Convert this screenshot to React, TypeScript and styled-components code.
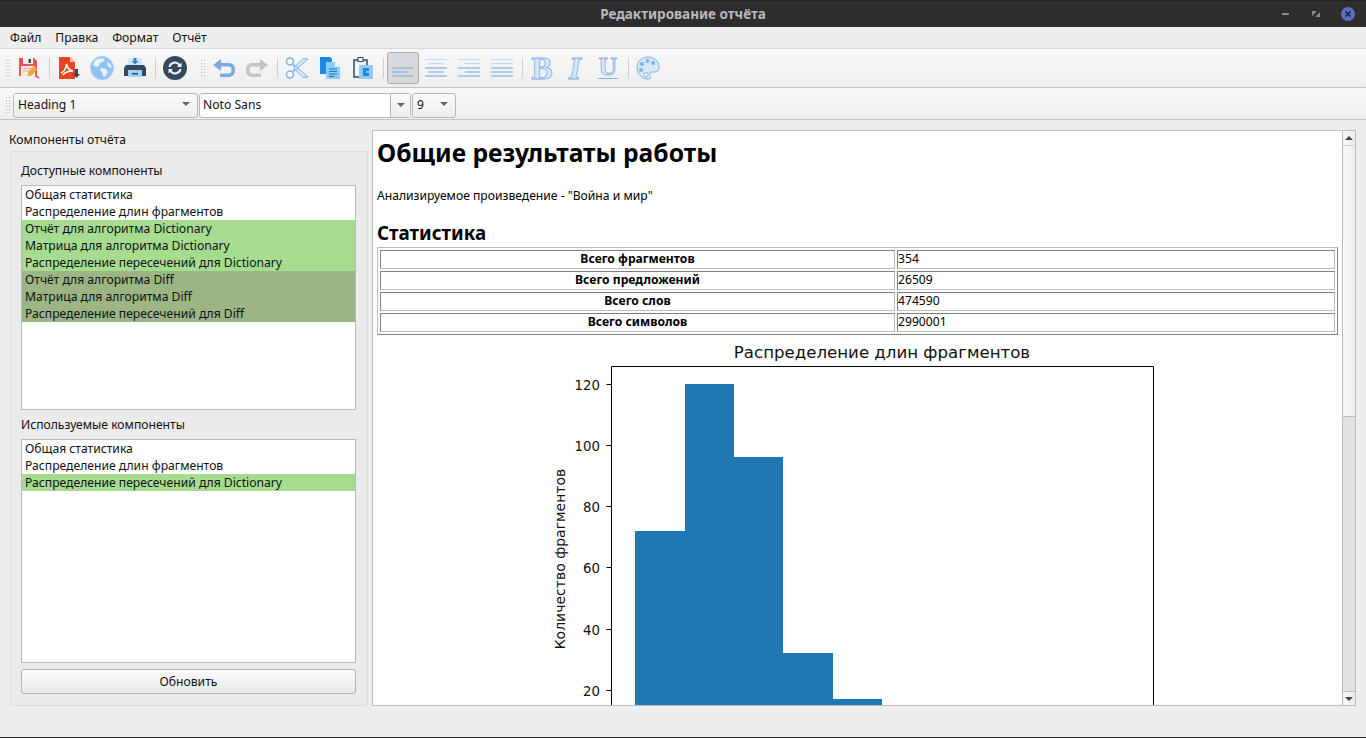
import React from 'react';
import styled, { createGlobalStyle } from 'styled-components';

const GlobalStyle = createGlobalStyle`
  html, body {
    margin: 0;
    padding: 0;
    background: #eeeeee;
  }
  * {
    box-sizing: border-box;
  }
  body {
    font-family: 'Noto Sans', sans-serif;
    font-size: 12.15px;
    color: #111;
  }
`;

const Window = styled.div`
  width: 1366px;
  height: 738px;
  display: flex;
  flex-direction: column;
  overflow: hidden;
  background: #eeeeee;
  border-bottom: 1px solid #2b2b2b;
`;

const TitleBar = styled.div`
  height: 27px;
  flex: none;
  display: flex;
  align-items: center;
  justify-content: center;
  position: relative;
  background: #2d2d2d;
  border-top: 1px solid #222;
  color: #b9b9b9;
  font-size: 13.5px;
  font-weight: 700;
`;

const WindowButtons = styled.div`
  position: absolute;
  right: 10px;
  top: 5px;
  display: flex;
  align-items: center;
  gap: 19px;
`;

const MenuBar = styled.div`
  height: 22px;
  flex: none;
  display: flex;
  align-items: center;
  padding-left: 10px;
  gap: 14px;
  background: #eeeeee;
  border-bottom: 1px solid #d8d8d8;
`;

const MenuItem = styled.span`
  font-size: 12.15px;
`;

const Toolbar = styled.div`
  height: 39px;
  flex: none;
  display: flex;
  align-items: center;
  padding-left: 5px;
  background: linear-gradient(#f8f8f8, #eeeeee);
  border-bottom: 1px solid #c4c4c4;
`;

const Grip = styled.div<{ $offset?: number }>`
  width: 6px;
  height: 18px;
  margin: 0 2px 0 ${({ $offset }) => $offset ?? 0}px;
  flex: none;
  background-image: radial-gradient(#b4b4b4 0.7px, transparent 0.8px);
  background-size: 3px 3px;
`;

const Separator = styled.div`
  width: 1px;
  height: 20px;
  margin: 0 3px;
  flex: none;
  background: #cfcfcf;
`;

const ToolButton = styled.div<{ $active?: boolean }>`
  width: 32px;
  height: 32px;
  margin-right: 1px;
  flex: none;
  display: flex;
  align-items: center;
  justify-content: center;
  border-radius: 3px;
  ${({ $active }) =>
    $active ? 'background: #d9d9d9; border: 1px solid #a9a9a9;' : ''}
`;

const FormatBar = styled.div`
  height: 32px;
  flex: none;
  display: flex;
  align-items: center;
  padding: 3px 0 0 5px;
  background: linear-gradient(#f8f8f8, #eeeeee);
  border-bottom: 1px solid #c4c4c4;
`;

const Combo = styled.div<{ $w: number }>`
  width: ${({ $w }) => $w}px;
  height: 25px;
  margin-right: 1px;
  flex: none;
  display: flex;
  align-items: center;
  justify-content: space-between;
  padding: 0 7px 2px 4px;
  border: 1px solid #b8b8b8;
  border-radius: 3px;
  background: linear-gradient(#fbfbfb, #ededed);
`;

const EditCombo = styled.div<{ $w: number }>`
  width: ${({ $w }) => $w}px;
  height: 25px;
  margin-right: 1px;
  flex: none;
  display: flex;
  align-items: stretch;
  border: 1px solid #b8b8b8;
  border-radius: 3px;
  background: #fff;
`;

const EditText = styled.div`
  flex: 1;
  display: flex;
  align-items: center;
  padding: 0 0 2px 3px;
`;

const EditArrow = styled.div`
  width: 20px;
  display: flex;
  align-items: center;
  justify-content: center;
  border-left: 1px solid #b8b8b8;
  background: linear-gradient(#fbfbfb, #ededed);
`;

const Arrow = styled.span`
  width: 0;
  height: 0;
  border-left: 4px solid transparent;
  border-right: 4px solid transparent;
  border-top: 4px solid #666;
`;

const Main = styled.div`
  flex: 1;
  min-height: 0;
  display: flex;
  padding: 10px 10px 31px 10px;
  gap: 4px;
`;

const SidePanel = styled.div`
  width: 358px;
  flex: none;
  display: flex;
  flex-direction: column;
`;

const PanelTitle = styled.div`
  margin: 1px 0 2px -1px;
  height: 18px;
  line-height: 18px;
`;

const GroupBox = styled.div`
  flex: 1;
  min-height: 0;
  display: flex;
  flex-direction: column;
  padding: 9px 11px 11px 10px;
  border: 1px solid #dcdcdc;
  border-radius: 2px;
  background: #ebebeb;
`;

const ListLabel = styled.div`
  height: 18px;
  line-height: 20px;
  margin-bottom: 6px;
`;

const ListBox = styled.div<{ $h: number; $gap: number }>`
  height: ${({ $h }) => $h}px;
  flex: none;
  margin-bottom: ${({ $gap }) => $gap}px;
  background: #fff;
  border: 1px solid #b9b9b9;
`;

const ROW_COLORS: Record<string, string> = {
  none: 'transparent',
  dictionary: '#a5dc8f',
  diff: '#9bb584',
};

const ListRow = styled.div<{ $kind: string }>`
  height: 17px;
  line-height: 18px;
  padding-left: 3px;
  white-space: nowrap;
  background: ${({ $kind }) => ROW_COLORS[$kind]};
`;

const UpdateButton = styled.div`
  height: 25px;
  display: flex;
  align-items: center;
  justify-content: center;
  border: 1px solid #b4b4b4;
  border-radius: 3px;
  background: linear-gradient(#fafafa, #e9e9e9);
`;

const DocumentFrame = styled.div`
  width: 984px;
  flex: none;
  display: flex;
  overflow: hidden;
  background: #fff;
  border: 1px solid #bdbdbd;
`;

const DocumentBody = styled.div`
  flex: 1;
  min-width: 0;
  overflow: hidden;
  padding: 3px 4px 0;
  color: #000;
`;

const Heading = styled.h1`
  margin: 0;
  height: 36px;
  font-size: 24.65px;
  line-height: 38px;
  font-weight: 700;
`;

const Paragraph = styled.p`
  margin: 17px 0 0;
  height: 18px;
  line-height: 18px;
`;

const SubHeading = styled.h2`
  margin: 15px 0 0;
  height: 27px;
  font-size: 18.8px;
  line-height: 26px;
  font-weight: 700;
`;

const StatsTable = styled.div`
  width: 961px;
  padding: 2px;
  display: flex;
  flex-direction: column;
  gap: 2px;
  border: 1px solid;
  border-color: #bdbdbd #808080 #808080 #bdbdbd;
`;

const StatsRow = styled.div`
  display: grid;
  grid-template-columns: 515px 1fr;
  column-gap: 2px;
`;

const StatsCell = styled.div<{ $head?: boolean }>`
  height: 19px;
  line-height: 15px;
  border: 1px solid;
  border-color: #808080 #bdbdbd #bdbdbd #808080;
  ${({ $head }) => ($head ? 'font-weight: 700; text-align: center;' : '')}
`;

const Chart = styled.svg`
  display: block;
  margin: 8px 0 0 -1px;
`;

const ScrollBar = styled.div`
  width: 13px;
  flex: none;
  display: flex;
  flex-direction: column;
  border-left: 1px solid #bdbdbd;
  background: #e2e2e2;
`;

const ScrollButton = styled.div<{ $down?: boolean }>`
  height: 14px;
  flex: none;
  display: flex;
  align-items: center;
  justify-content: center;
  background: linear-gradient(90deg, #f8f8f8, #ececec);
  ${({ $down }) => ($down ? 'border-top: 1px solid #bdbdbd;' : '')}
`;

const ScrollHandle = styled.div`
  height: 272px;
  flex: none;
  background: linear-gradient(90deg, #f9f9f9, #eeeeee);
  border-top: 1px solid #cfcfcf;
  border-bottom: 1px solid #bdbdbd;
`;

const ScrollTrack = styled.div`
  flex: 1;
`;

const ScrollArrow = styled.span<{ $down?: boolean }>`
  width: 0;
  height: 0;
  border-left: 4px solid transparent;
  border-right: 4px solid transparent;
  ${({ $down }) =>
    $down ? 'border-top: 4px solid #444;' : 'border-bottom: 4px solid #444;'}
`;

const BLUE = '#7fb2e5';
const PALE = '#d6e8f8';

const SaveIcon = () => (
  <svg width="22" height="22" viewBox="0 0 22 22">
    <path d="M1 1h15l3 3v15H1z" fill="#e8545a" />
    <rect x="5" y="1" width="10" height="6" fill="#f2f2f2" />
    <rect x="10.500" y="2" width="2.500" height="4" fill="#444" />
    <rect x="3" y="9" width="14" height="10" fill="#fbe9e2" />
    <path d="M5 11.500h9M5 14h6" stroke="#e9a9a0" strokeWidth="1" />
    <path d="M10 15l6-6 3.500 3.500-6 6-4 .5z" fill="#e9a63c" />
    <path d="M17 18.500l4 2.500" stroke="#e0605a" strokeWidth="1.500" />
  </svg>
);

const PdfIcon = () => (
  <svg width="24" height="24" viewBox="0 0 24 24">
    <path d="M2 1h11l5 5v17H2z" fill="#e8451e" />
    <path d="M13 1l5 5h-5z" fill="#f9c3ae" />
    <path
      d="M4 17c3-1 5-5 5.500-9 .7 4 3 6.500 6.500 7-4 0-8 1-10 4"
      fill="none"
      stroke="#fff"
      strokeWidth="1.500"
    />
    <path d="M18 13h3v5h2l-3.500 4-3.500-4h2z" fill="#34495e" />
  </svg>
);

const GlobeIcon = () => (
  <svg width="24" height="24" viewBox="0 0 24 24">
    <circle cx="12" cy="12" r="11.500" fill="#8fc3f2" />
    <circle cx="12" cy="12" r="11.500" fill="none" stroke="#a9d0f2" />
    <path
      d="M7 3c3-1 6-1 8 0l-2 3-3 1-1 3-3 1-3-2c1-3 2-5 4-6zM11 12l5 1 2 3-3 5-2-1-1-4-2-2zM18 6l3 3 1 3-3-1-2-3z"
      fill="#e8f2fb"
    />
  </svg>
);

const PrintIcon = () => (
  <svg width="24" height="24" viewBox="0 0 24 24">
    <rect x="5" y="2" width="14" height="9" fill="#cfe6f8" />
    <path d="M10.500 2h3v3h2l-3.500 3.500L8.500 5h2z" fill="#2f86d6" />
    <path d="M3 9h18l2 3v8H1v-8z" fill="#34495e" />
    <rect x="5" y="14" width="14" height="7" fill="#9fd0f5" />
    <rect x="9" y="17" width="6" height="1.500" fill="#34495e" />
  </svg>
);

const SyncIcon = () => (
  <svg width="24" height="24" viewBox="0 0 24 24">
    <circle cx="12" cy="12" r="12" fill="#34495e" />
    <path
      d="M5.500 11A6.500 6.500 0 0 1 17 8l1.500-1.500V11h-4.500l1.500-1.500A4.500 4.500 0 0 0 7.500 11zM18.500 13A6.500 6.500 0 0 1 7 16l-1.500 1.500V13H10l-1.500 1.500a4.500 4.500 0 0 0 8-1.500z"
      fill="#f3f6f8"
    />
  </svg>
);

const UndoIcon = ({ color, flip }: { color: string; flip?: boolean }) => (
  <svg
    width="24"
    height="20"
    viewBox="0 0 24 20"
    style={flip ? { transform: 'scaleX(-1)' } : undefined}
  >
    <path
      d="M1 7l8-6v4h8c4 0 6 3 6 7s-2 7-6 7H8v-3.500h9c2 0 2.500-1.500 2.500-3.500S19 8.500 17 8.500H9V13z"
      fill={color}
    />
  </svg>
);

const CutIcon = () => (
  <svg width="24" height="24" viewBox="0 0 24 24" fill="none">
    <circle cx="5" cy="5.500" r="3.500" stroke={BLUE} strokeWidth="1.500" fill="#fff" />
    <circle cx="5" cy="18.500" r="3.500" stroke={BLUE} strokeWidth="1.500" fill="#fff" />
    <path d="M8 8l15 13-5 .5-8-8zM8 16l15-13-5-.5-8 8z" fill={PALE} stroke={BLUE} />
  </svg>
);

const CopyIcon = () => (
  <svg width="22" height="24" viewBox="0 0 22 24">
    <path d="M1 1h10l2 2v15H1z" fill="#1e88e5" />
    <path d="M7 6h9l5 5v12H7z" fill="#90caf9" />
    <path d="M16 6l5 5h-5z" fill="#e3f2fd" />
    <path d="M10 13h8M10 15.500h8M10 18h8M10 20.500h5" stroke="#1976d2" strokeWidth="1" />
  </svg>
);

const PasteIcon = () => (
  <svg width="22" height="24" viewBox="0 0 22 24">
    <path d="M2 4h13v17H2z" fill="#f5f5f5" stroke="#34495e" strokeWidth="1.500" />
    <rect x="6" y="1.500" width="5" height="4" fill="#f5f5f5" stroke="#34495e" />
    <rect x="7" y="9" width="14" height="14" fill="#90caf9" />
    <path d="M11 12h6v3h-3v2h3v3h-6z" fill="#1e88e5" />
  </svg>
);

// short lines of an align icon run from start to start + 15, long ones are full width
const AlignIcon = ({ start, full }: { start: number; full?: boolean }) => (
  <svg width="22" height="20" viewBox="0 0 22 20">
    {[1.500, 5.500, 10, 14, 18].map((y, i) => {
      const short = i % 2 === 1 && !full;
      return (
        <line
          key={y}
          x1={short ? start : 0}
          x2={short ? start + 15 : 22}
          y1={y}
          y2={y}
          stroke={i < 2 ? '#c5dcf2' : BLUE}
          strokeWidth="1.200"
        />
      );
    })}
  </svg>
);

const LetterIcon = ({ letter, italic, under }: { letter: string; italic?: boolean; under?: boolean }) => (
  <svg width="30" height="40" viewBox="0 0 30 40">
    <text
      x="15"
      y={under ? 27 : 31}
      textAnchor="middle"
      fontFamily="'Liberation Serif', serif"
      fontWeight="700"
      fontStyle={italic ? 'italic' : 'normal'}
      fontSize={under ? 26 : 32}
      fill={PALE}
      stroke={BLUE}
      strokeWidth="0.800"
    >
      {letter}
    </text>
    {under && <line x1="5" x2="25" y1="30.500" y2="30.500" stroke={BLUE} />}
  </svg>
);

const PaletteIcon = () => (
  <svg width="24" height="24" viewBox="0 0 24 24">
    <path
      d="M12 1C5 1 1 6 1 12s5 11 11 11c3 0 3-2 2-3.500-1-2 0-3.500 2-3.500h3c3 0 4-2 4-5C23 5 18 1 12 1z"
      fill={PALE}
      stroke={BLUE}
    />
    <circle cx="6" cy="8" r="2" fill={BLUE} />
    <circle cx="11.500" cy="5" r="2" fill={BLUE} />
    <circle cx="17" cy="7" r="2" fill={BLUE} />
    <circle cx="5" cy="14" r="2" fill={BLUE} />
    <circle cx="10" cy="18.500" r="2" fill="#fff" stroke={BLUE} />
  </svg>
);

const available: [string, string][] = [
  ['Общая статистика', 'none'],
  ['Распределение длин фрагментов', 'none'],
  ['Отчёт для алгоритма Dictionary', 'dictionary'],
  ['Матрица для алгоритма Dictionary', 'dictionary'],
  ['Распределение пересечений для Dictionary', 'dictionary'],
  ['Отчёт для алгоритма Diff', 'diff'],
  ['Матрица для алгоритма Diff', 'diff'],
  ['Распределение пересечений для Diff', 'diff'],
];

const used: [string, string][] = [
  ['Общая статистика', 'none'],
  ['Распределение длин фрагментов', 'none'],
  ['Распределение пересечений для Dictionary', 'dictionary'],
];

const stats = [
  ['Всего фрагментов', '354'],
  ['Всего предложений', '26509'],
  ['Всего слов', '474590'],
  ['Всего символов', '2990001'],
];

// chart coordinates are page pixels, the svg starts at 376,343
const OX = 376;
const OY = 343;
const bars = [
  [635, 685, 531],
  [685, 734, 384],
  [734, 783, 457],
  [783, 833, 653],
  [833, 882, 699],
];
const ticks = [
  [120, 384.5],
  [100, 445.5],
  [80, 506.5],
  [60, 567.5],
  [40, 629.5],
  [20, 690.5],
];

const HistogramChart = () => (
  <Chart width="960" height="365" viewBox="0 0 960 365">
    <g fontFamily="'DejaVu Sans', sans-serif" fill="#111">
      <text x={506} y={15} textAnchor="middle" fontSize="16.600">
        Распределение длин фрагментов
      </text>
      <text
        transform={`translate(${565 - OX} ${559 - OY}) rotate(-90)`}
        textAnchor="middle"
        fontSize="14"
      >
        Количество фрагментов
      </text>
      {ticks.map(([label, y]) => (
        <g key={label}>
          <line x1={606.5 - OX} x2={611 - OX} y1={y - OY} y2={y - OY} stroke="#000" />
          <text x={600 - OX} y={y - OY + 5} textAnchor="end" fontSize="13.300">
            {label}
          </text>
        </g>
      ))}
    </g>
    {bars.map(([x1, x2, top]) => (
      <rect key={x1} x={x1 - OX} y={top - OY} width={x2 - x1} height={400} fill="#1f77b4" />
    ))}
    <path
      d={`M${611.5 - OX} 400V${366.5 - OY}H${1153.5 - OX}V400`}
      fill="none"
      stroke="#000"
    />
  </Chart>
);

const App: React.FC = () => (
  <Window>
    <GlobalStyle />
    <TitleBar>
      Редактирование отчёта
      <WindowButtons>
        <svg width="12" height="16" viewBox="0 0 12 16">
          <rect x="2" y="7" width="7" height="2" fill="#8a8a8a" />
        </svg>
        <svg width="10" height="16" viewBox="0 0 10 16">
          <path d="M1 5h5L1 10zM9 11H4l5-5z" fill="#8a8a8a" />
        </svg>
        <svg width="16" height="16" viewBox="0 0 16 16">
          <circle cx="8" cy="8" r="7" fill="#5a6fc0" />
          <path d="M5.500 5.500l5 5M10.500 5.500l-5 5" stroke="#1d2233" strokeWidth="1.600" />
        </svg>
      </WindowButtons>
    </TitleBar>
    <MenuBar>
      <MenuItem>Файл</MenuItem>
      <MenuItem>Правка</MenuItem>
      <MenuItem>Формат</MenuItem>
      <MenuItem>Отчёт</MenuItem>
    </MenuBar>
    <Toolbar>
      <Grip />
      <ToolButton><SaveIcon /></ToolButton>
      <Separator />
      <ToolButton><PdfIcon /></ToolButton>
      <ToolButton><GlobeIcon /></ToolButton>
      <ToolButton><PrintIcon /></ToolButton>
      <Separator />
      <ToolButton><SyncIcon /></ToolButton>
      <Grip $offset={8} />
      <ToolButton><UndoIcon color="#7ea9dc" /></ToolButton>
      <ToolButton><UndoIcon color="#c4c4c4" flip /></ToolButton>
      <Separator />
      <ToolButton><CutIcon /></ToolButton>
      <ToolButton><CopyIcon /></ToolButton>
      <ToolButton><PasteIcon /></ToolButton>
      <Separator />
      <ToolButton $active><AlignIcon start={0} /></ToolButton>
      <ToolButton><AlignIcon start={3.5} /></ToolButton>
      <ToolButton><AlignIcon start={7} /></ToolButton>
      <ToolButton><AlignIcon start={0} full /></ToolButton>
      <Separator />
      <ToolButton><LetterIcon letter="B" /></ToolButton>
      <ToolButton><LetterIcon letter="I" italic /></ToolButton>
      <ToolButton><LetterIcon letter="U" under /></ToolButton>
      <Separator />
      <ToolButton><PaletteIcon /></ToolButton>
    </Toolbar>
    <FormatBar>
      <Grip />
      <Combo $w={185}>
        Heading 1
        <Arrow />
      </Combo>
      <EditCombo $w={212}>
        <EditText>Noto Sans</EditText>
        <EditArrow>
          <Arrow />
        </EditArrow>
      </EditCombo>
      <Combo $w={44}>
        9
        <Arrow />
      </Combo>
    </FormatBar>
    <Main>
      <SidePanel>
        <PanelTitle>Компоненты отчёта</PanelTitle>
        <GroupBox>
          <ListLabel>Доступные компоненты</ListLabel>
          <ListBox $h={225} $gap={5}>
            {available.map(([name, kind]) => (
              <ListRow key={name} $kind={kind}>{name}</ListRow>
            ))}
          </ListBox>
          <ListLabel>Используемые компоненты</ListLabel>
          <ListBox $h={224} $gap={6}>
            {used.map(([name, kind]) => (
              <ListRow key={name} $kind={kind}>{name}</ListRow>
            ))}
          </ListBox>
          <UpdateButton>Обновить</UpdateButton>
        </GroupBox>
      </SidePanel>
      <DocumentFrame>
        <DocumentBody>
          <Heading>Общие результаты работы</Heading>
          <Paragraph>Анализируемое произведение - "Война и мир"</Paragraph>
          <SubHeading>Статистика</SubHeading>
          <StatsTable>
            {stats.map(([name, value]) => (
              <StatsRow key={name}>
                <StatsCell $head>{name}</StatsCell>
                <StatsCell>{value}</StatsCell>
              </StatsRow>
            ))}
          </StatsTable>
          <HistogramChart />
        </DocumentBody>
        <ScrollBar>
          <ScrollButton><ScrollArrow /></ScrollButton>
          <ScrollHandle />
          <ScrollTrack />
          <ScrollButton $down><ScrollArrow $down /></ScrollButton>
        </ScrollBar>
      </DocumentFrame>
    </Main>
  </Window>
);

export default App;
